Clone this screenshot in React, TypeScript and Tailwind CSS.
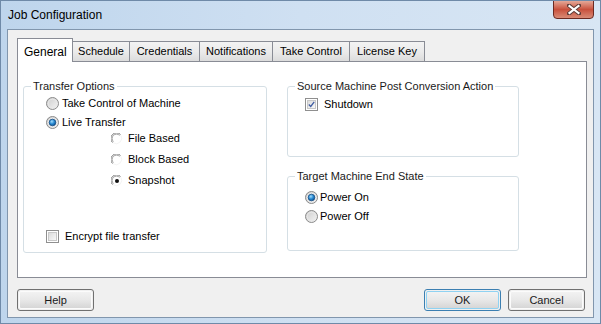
import React from "react";

const Radio: React.FC<{ checked?: boolean }> = ({ checked }) => (
  <svg width="13" height="13" viewBox="0 0 13 13" className="shrink-0">
    <defs>
      <linearGradient id="rbg" x1="0" y1="0" x2="1" y2="1">
        <stop offset="0" stopColor="#cbcbcb" />
        <stop offset="1" stopColor="#f6f6f6" />
      </linearGradient>
      <radialGradient id="rdot" cx="0.4" cy="0.35" r="0.7">
        <stop offset="0" stopColor="#a6dcfa" />
        <stop offset="0.5" stopColor="#2c8ed6" />
        <stop offset="1" stopColor="#0a4a8a" />
      </radialGradient>
    </defs>
    <circle cx="6.5" cy="6.5" r="6" fill="url(#rbg)" stroke="#8a8a8a" strokeWidth="1" />
    <circle cx="6.5" cy="6.5" r="4.3" fill="none" stroke="#e8e8e8" strokeWidth="1" />
    {checked && <circle cx="6.5" cy="6.5" r="3.3" fill="url(#rdot)" stroke="#174f86" strokeWidth="0.8" />}
  </svg>
);

const FlatRadio: React.FC<{ checked?: boolean }> = ({ checked }) => (
  <svg width="12" height="12" viewBox="0 0 12 12" className="shrink-0">
    <circle cx="6" cy="6" r="5.5" fill="#ffffff" />
    <path d="M1.5 9.5 A5.5 5.5 0 0 1 9.5 1.5" fill="none" stroke="#7a7a7a" strokeWidth="1" />
    <path d="M2.4 8.6 A4.3 4.3 0 0 1 8.6 2.4" fill="none" stroke="#a0a0a0" strokeWidth="1" />
    <path d="M9.8 2.2 A5.5 5.5 0 0 1 2.2 9.8" fill="none" stroke="#f4f4f4" strokeWidth="1" />
    {checked && <circle cx="6" cy="6" r="2" fill="#111111" />}
  </svg>
);

const Check: React.FC<{ checked?: boolean }> = ({ checked }) => (
  <div className="w-[13px] h-[13px] shrink-0 border border-[#8f8f8f] bg-white p-[1px]">
    <div className="w-full h-full border border-[#c8c8c8] bg-gradient-to-br from-[#dcdcdc] to-[#f8f8f8] flex items-center justify-center">
      {checked && (
        <svg width="9" height="9" viewBox="0 0 9 9">
          <path d="M1 4.5 L3.5 7 L8 1" fill="none" stroke="#3d5aa0" strokeWidth="1.6" />
        </svg>
      )}
    </div>
  </div>
);

const Btn: React.FC<{ label: string; focused?: boolean }> = ({ label, focused }) => (
  <div
    className={`w-[77px] h-[22px] rounded-[3px] border p-[1px] ${
      focused ? "border-[#3c7fb1]" : "border-[#707070]"
    }`}
  >
    <div
      className={`w-full h-full rounded-[2px] border flex items-center justify-center bg-gradient-to-b from-[#f2f2f2] via-[#e8e8e8] to-[#d6d6d6] text-[#1a1a1a] ${
        focused ? "border-[#8fd2f2]" : "border-[#fbfbfb]"
      }`}
    >
      {label}
    </div>
  </div>
);

const Group: React.FC<{ title: string; className: string; children: React.ReactNode }> = ({
  title,
  className,
  children,
}) => (
  <div className={`relative border border-[#d5dfe5] rounded-[3px] ${className}`}>
    <span className="absolute -top-[8px] left-[7px] px-[2px] bg-white leading-[14px] text-[#1a1a1a]">
      {title}
    </span>
    {children}
  </div>
);

const tabs = [
  { label: "Schedule", w: "w-[57px]" },
  { label: "Credentials", w: "w-[70px]" },
  { label: "Notifications", w: "w-[73px]" },
  { label: "Take Control", w: "w-[77px]" },
  { label: "License Key", w: "w-[75px]" },
];

export default function App() {
  return (
    <div className="w-[601px] h-[324px] overflow-hidden flex flex-col bg-gradient-to-r from-[#bed5ec] via-[#cfe0f2] to-[#d8e6f4] border border-[#6f8aa8] px-[6px] pb-[5px] font-['Liberation_Sans',Arial,sans-serif] text-[11px]">
      {/* title bar */}
      <div className="h-[28px] shrink-0 flex items-start justify-between">
        <div className="pt-[5px] pl-[1px] text-[12px] text-black">Job Configuration</div>
        <div className="w-[41px] h-[19px] -mt-[1px] rounded-b-[4px] border border-[#6b2a22] bg-gradient-to-b from-[#e4a898] via-[#c8503c] to-[#d88a76] flex items-center justify-center">
          <svg width="14" height="11" viewBox="0 0 14 11">
            <path d="M2 1.5 L12 9.5 M12 1.5 L2 9.5" stroke="#5b3a36" strokeWidth="4" strokeLinecap="square" />
            <path d="M2.5 2 L11.5 9 M11.5 2 L2.5 9" stroke="#ffffff" strokeWidth="2.2" strokeLinecap="square" />
          </svg>
        </div>
      </div>

      {/* client area */}
      <div className="flex-1 border border-[#8196ad] bg-[#f0f0f0] pl-[9px] pr-[6px] pt-[7px] flex flex-col">
        <div className="flex items-end h-[24px]">
          <div className="relative z-10 w-[56px] h-[24px] -mb-[1px] bg-white border-t border-l border-r border-[#898c95] pl-[6px] pt-[4px] text-[12px] text-black">
            General
          </div>
          {tabs.map((t) => (
            <div
              key={t.label}
              className={`${t.w} h-[20px] border-t border-r border-[#898c95] bg-gradient-to-b from-[#f3f3f3] via-[#ebebeb] to-[#dcdcdc] flex items-center justify-center text-black`}
            >
              {t.label}
            </div>
          ))}
        </div>

        {/* tab page */}
        <div className="h-[217px] bg-white border border-[#898c95] flex gap-[20px] pl-[5px] pt-[24px]">
          <Group title="Transfer Options" className="w-[244px] h-[167px] flex flex-col pt-[7px] pl-[22px]">
            <div className="h-[19px] flex items-center gap-[3px]">
              <Radio />
              <span>Take Control of Machine</span>
            </div>
            <div className="h-[19px] flex items-center gap-[3px]">
              <Radio checked />
              <span>Live Transfer</span>
            </div>
            <div className="-mt-[4px] pl-[65px] flex flex-col">
              <div className="h-[21px] flex items-center gap-[5px]">
                <FlatRadio />
                <span>File Based</span>
              </div>
              <div className="h-[21px] flex items-center gap-[5px]">
                <FlatRadio />
                <span>Block Based</span>
              </div>
              <div className="h-[21px] flex items-center gap-[5px]">
                <FlatRadio checked />
                <span>Snapshot</span>
              </div>
            </div>
            <div className="mt-auto mb-[6px] h-[19px] flex items-center gap-[6px]">
              <Check />
              <span>Encrypt file transfer</span>
            </div>
          </Group>

          <div className="flex flex-col">
            <Group title="Source Machine Post Conversion Action" className="w-[232px] h-[71px] pt-[9px] pl-[17px]">
              <div className="h-[17px] flex items-center gap-[6px]">
                <Check checked />
                <span>Shutdown</span>
              </div>
            </Group>
            <Group title="Target Machine End State" className="mt-[19px] w-[232px] h-[75px] pt-[11px] pl-[17px] flex flex-col">
              <div className="h-[19px] flex items-center gap-[2px]">
                <Radio checked />
                <span>Power On</span>
              </div>
              <div className="h-[19px] flex items-center gap-[2px]">
                <Radio />
                <span>Power Off</span>
              </div>
            </Group>
          </div>
        </div>

        {/* buttons */}
        <div className="flex items-center mt-[11px] pr-[2px]">
          <Btn label="Help" />
          <div className="ml-auto flex gap-[7px]">
            <Btn label="OK" focused />
            <Btn label="Cancel" />
          </div>
        </div>
      </div>
    </div>
  );
}
